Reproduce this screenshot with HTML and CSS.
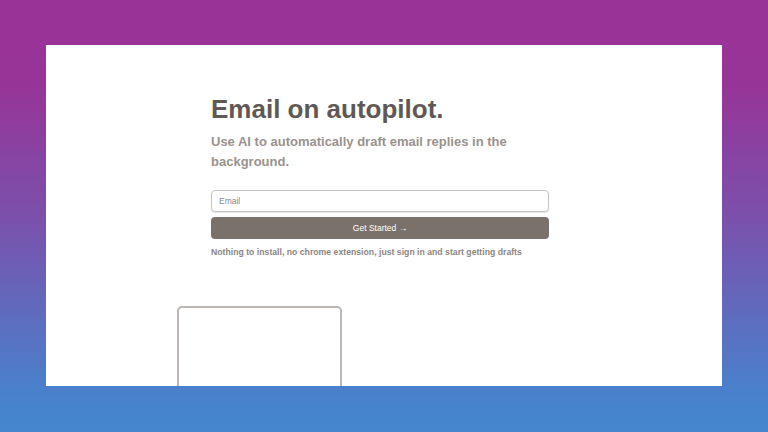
FILE: index.html
```html
<!DOCTYPE html>
<html lang="en">
<head>
<meta charset="utf-8">
<title>Email on autopilot</title>
<link rel="stylesheet" href="styles.css">
</head>
<body>
<div class="panel">
  <section class="hero">
    <h1 class="title">Email on autopilot.</h1>
    <p class="subtitle">Use AI to automatically draft email replies in the background.</p>
    <form class="signup">
      <input class="email" type="email" placeholder="Email">
      <button class="cta" type="button">Get Started →</button>
    </form>
    <p class="note">Nothing to install, no chrome extension, just sign in and start getting drafts</p>
  </section>
  <div class="card"></div>
</div>
</body>
</html>
```

FILE: styles.css
```css
html, body {
  margin: 0;
  padding: 0;
}
body {
  width: 768px;
  height: 432px;
  overflow: hidden;
  font-family: "Liberation Sans", Arial, sans-serif;
  background: linear-gradient(to bottom, #9a3397 0%, #983397 18%, #7b50ab 50%, #4a80cc 90%, #4487cf 100%);
}
.panel {
  margin: 45px 0 0 46px;
  width: 676px;
  height: 341px;
  background: #ffffff;
  overflow: hidden;
  display: flex;
  flex-direction: column;
}
.hero {
  width: 338px;
  margin-left: 165px;
  padding-top: 48px;
  display: flex;
  flex-direction: column;
}
.title {
  margin: 0;
  font-size: 26px;
  line-height: 32px;
  font-weight: 700;
  color: #5f5955;
}
.subtitle {
  margin: 7px 0 0;
  font-size: 13px;
  line-height: 20px;
  font-weight: 700;
  color: #9a928d;
}
.signup {
  margin: 18px 0 0;
  display: flex;
  flex-direction: column;
  gap: 5px;
}
.email {
  box-sizing: border-box;
  height: 22px;
  margin: 0;
  padding: 0 7px;
  border: 1px solid #c6c2be;
  border-radius: 4px;
  box-shadow: 0 1px 1px rgba(0,0,0,0.1);
  font-family: "Liberation Sans", Arial, sans-serif;
  font-size: 8.5px;
  color: #555;
  background: #fff;
  outline: none;
}
.email::placeholder {
  color: #878a92;
}
.cta {
  height: 22px;
  margin: 0;
  padding: 0;
  border: none;
  border-radius: 4px;
  background: #7a716b;
  color: #ffffff;
  font-family: "Liberation Sans", Arial, sans-serif;
  font-size: 8.5px;
}
.note {
  margin: 7px 0 0;
  font-size: 8.7px;
  line-height: 12px;
  font-weight: 700;
  color: #8c8580;
  white-space: nowrap;
}
.card {
  box-sizing: border-box;
  margin: 48px 0 0 131px;
  width: 165px;
  height: 120px;
  flex-shrink: 0;
  border: 2px solid #bcb7b2;
  border-radius: 5px;
  background: #fff;
}
```
